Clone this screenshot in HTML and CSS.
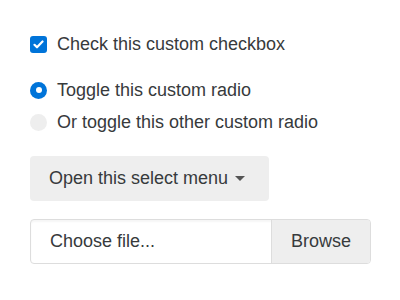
FILE: index.html
```html
<!DOCTYPE html>
<html lang="en">
<head>
    <meta charset="UTF-8">
    <title>Custom forms</title>
    <link rel="stylesheet" href="styles.css">
</head>
<body>

    <div class="container">
        <label class="custom-control check-row">
            <span class="indicator checkbox checked">
                <svg width="11" height="9" viewBox="0 0 11 9"><path d="M1.5 4.8 L4 7.3 L9.5 1.5" fill="none" stroke="#fff" stroke-width="2.2" stroke-linecap="round" stroke-linejoin="round"/></svg>
            </span>
            <span class="label-text">Check this custom checkbox</span>
        </label>

        <label class="custom-control radio-row">
            <span class="indicator radio checked"><span class="dot"></span></span>
            <span class="label-text">Toggle this custom radio</span>
        </label>
        <label class="custom-control radio-row second">
            <span class="indicator radio"></span>
            <span class="label-text">Or toggle this other custom radio</span>
        </label>

        <div class="custom-select">
            <span>Open this select menu</span>
            <span class="caret"></span>
        </div>

        <div class="custom-file">
            <span class="file-text">Choose file...</span>
            <span class="browse">Browse</span>
        </div>
    </div>

</body>
</html>
```

FILE: styles.css
```css
/* custom form controls */
body { margin: 0; background: #fff; font-family: "Liberation Sans", Arial, sans-serif; font-size: 18px; color: #373a3c; }
.container { padding: 32px 30px; display: flex; flex-direction: column; align-items: flex-start; }

.custom-control { display: flex; align-items: center; gap: 10px; height: 24px; line-height: 24px; }
.radio-row { margin-top: 22px; }
.radio-row.second { margin-top: 8px; }

.indicator { width: 17px; height: 17px; display: flex; align-items: center; justify-content: center; background: #eee; flex: none; }
.checkbox { border-radius: 3px; }
.radio { border-radius: 50%; }
.indicator.checked { background: #0074d9; }
.dot { width: 6px; height: 6px; border-radius: 50%; background: #fff; }

.custom-select { margin-top: 22px; width: 239px; height: 45px; box-sizing: border-box; padding: 0 24px 0 19px; background: #eee; border-radius: 4px; display: flex; align-items: center; justify-content: space-between; }
.caret { width: 0; height: 0; border-left: 5px solid transparent; border-right: 5px solid transparent; border-top: 5px solid #555; }

.custom-file { margin-top: 18px; width: 341px; height: 45px; box-sizing: border-box; border: 1px solid #ddd; border-radius: 4px; display: flex; align-items: stretch; box-shadow: inset 0 2px 2px rgba(0, 0, 0, 0.04); overflow: hidden; }
.file-text { flex: 1; display: flex; align-items: center; padding-left: 19px; }
.browse { width: 98px; display: flex; align-items: center; justify-content: center; background: #eee; border-left: 1px solid #ddd; }
```
